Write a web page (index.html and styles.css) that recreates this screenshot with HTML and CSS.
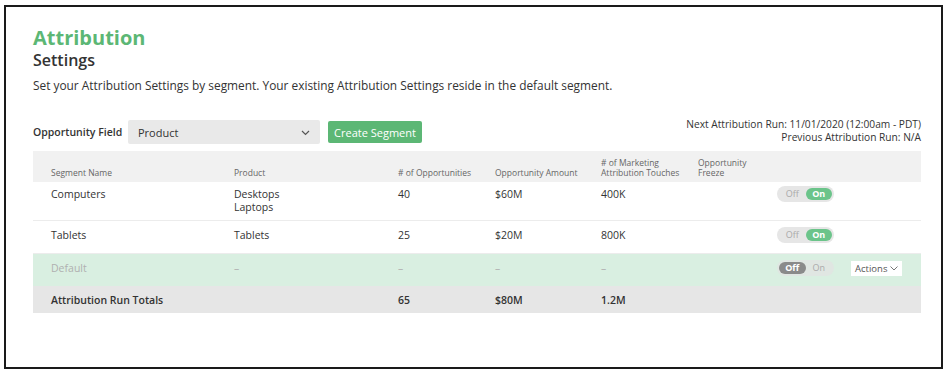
FILE: index.html
```html
<!DOCTYPE html>
<html>
<head>
<meta charset="utf-8">
<link rel="stylesheet" href="styles.css">
</head>
<body>
<div class="frame">
  <div class="page">
    <h1 class="title">Attribution</h1>
    <h2 class="subtitle">Settings</h2>
    <p class="desc">Set your Attribution Settings by segment. Your existing Attribution Settings reside in the default segment.</p>
    <div class="toolbar">
      <div class="field">
        <span class="field-label">Opportunity Field</span>
        <div class="select">
          <span>Product</span>
          <svg class="chev" width="9" height="6" viewBox="0 0 9 6"><path d="M1 1l3.5 3.5L8 1" fill="none" stroke="#555" stroke-width="1.2"/></svg>
        </div>
        <button class="btn">Create Segment</button>
      </div>
      <div class="runs">
        <div>Next Attribution Run: 11/01/2020 (12:00am - PDT)</div>
        <div>Previous Attribution Run: N/A</div>
      </div>
    </div>
    <div class="table">
      <div class="row head">
        <div class="c c1">Segment Name</div>
        <div class="c c2">Product</div>
        <div class="c c3"># of Opportunities</div>
        <div class="c c4">Opportunity Amount</div>
        <div class="c c5"># of Marketing<br>Attribution Touches</div>
        <div class="c c6">Opportunity<br>Freeze</div>
        <div class="c c7"></div>
      </div>
      <div class="row body r1">
        <div class="c c1">Computers</div>
        <div class="c c2">Desktops<br>Laptops</div>
        <div class="c c3">40</div>
        <div class="c c4">$60M</div>
        <div class="c c5">400K</div>
        <div class="c c6"></div>
        <div class="c c7"><div class="toggle"><span class="opt">Off</span><span class="opt on">On</span></div></div>
      </div>
      <div class="row body r2">
        <div class="c c1">Tablets</div>
        <div class="c c2">Tablets</div>
        <div class="c c3">25</div>
        <div class="c c4">$20M</div>
        <div class="c c5">800K</div>
        <div class="c c6"></div>
        <div class="c c7"><div class="toggle"><span class="opt">Off</span><span class="opt on">On</span></div></div>
      </div>
      <div class="row body default">
        <div class="c c1">Default</div>
        <div class="c c2">–</div>
        <div class="c c3">–</div>
        <div class="c c4">–</div>
        <div class="c c5">–</div>
        <div class="c c6"></div>
        <div class="c c7">
          <div class="toggle"><span class="opt off">Off</span><span class="opt">On</span></div>
          <div class="actions">Actions <svg width="8" height="5" viewBox="0 0 8 5"><path d="M0.5 0.5l3.5 3.5 3.5-3.5" fill="none" stroke="#777" stroke-width="1"/></svg></div>
        </div>
      </div>
      <div class="row totals">
        <div class="c c1">Attribution Run Totals</div>
        <div class="c c2"></div>
        <div class="c c3">65</div>
        <div class="c c4">$80M</div>
        <div class="c c5">1.2M</div>
        <div class="c c6"></div>
        <div class="c c7"></div>
      </div>
    </div>
  </div>
</div>
</body>
</html>
```
FILE: styles.css
```css
html, body {
  margin: 0;
  padding: 0;
  background: #fff;
}
body {
  font-family: "Open Sans", "Liberation Sans", sans-serif;
  color: #333;
}
.frame {
  margin: 5px 0 0 4px;
  width: 935px;
  height: 360px;
  border: 2px solid #1a1a1a;
  box-sizing: content-box;
}
.page {
  padding: 19px 20px 0 27px;
}
.title {
  margin: 0;
  font-size: 20px;
  font-weight: 700;
  color: #5cb775;
  line-height: 24px;
}
.subtitle {
  margin: 0;
  font-size: 16px;
  font-weight: 600;
  color: #333;
  line-height: 20px;
}
.desc {
  margin: 6px 0 0;
  font-size: 11.88px;
  line-height: 18px;
  color: #333;
}
.toolbar {
  display: flex;
  justify-content: space-between;
  align-items: flex-start;
  margin-top: 24px;
}
.field {
  display: flex;
  align-items: center;
  margin-top: 2px;
}
.field-label {
  font-size: 10.5px;
  font-weight: 600;
  color: #333;
  width: 95px;
  white-space: nowrap;
}
.select {
  width: 192px;
  height: 24px;
  background: #e9e9e9;
  border-radius: 2px;
  display: flex;
  align-items: center;
  justify-content: space-between;
  padding: 0 10px 0 10px;
  box-sizing: border-box;
  font-size: 11px;
  color: #333;
}
.chev { margin-top: 1px; }
.btn {
  margin-left: 8px;
  height: 22px;
  width: 94px;
  background: #5cb775;
  color: #fff;
  border: none;
  border-radius: 2px;
  font-family: inherit;
  font-size: 11px;
  padding: 0;
}
.runs {
  text-align: right;
  font-size: 10.2px;
  line-height: 13px;
  color: #333;
}
.table {
  margin-top: 7px;
  width: 888px;
}
.row {
  display: grid;
  grid-template-columns: 201px 164px 97px 106px 97px 79px 1fr;
  align-items: start;
}
.c:first-child { padding-left: 18px; }
.head {
  background: #f1f1f1;
  height: 31px;
  align-items: end;
  font-size: 8.5px;
  line-height: 10px;
  color: #666;
  padding-bottom: 4px;
  box-sizing: border-box;
}
.body {
  font-size: 10.5px;
  line-height: 13px;
  color: #333;
  border-bottom: 1px solid #ececec;
  padding-top: 6px;
  box-sizing: border-box;
}
.r1 { height: 39px; }
.r2 { height: 33px; padding-top: 8px; }
.default {
  height: 32px;
  background: #d9efe1;
  color: #aaa;
  border-bottom: none;
  padding-top: 8px;
}
.default .c { color: #b0b0b0; }
.totals {
  height: 27px;
  background: #e6e6e6;
  font-size: 10.5px;
  font-weight: 600;
  color: #333;
  align-items: center;
}
.c7 {
  display: flex;
  align-items: center;
  gap: 17px;
}
.body .c7 { margin-top: -2px; }
.toggle {
  display: flex;
  align-items: center;
  background: #e6e6e6;
  border-radius: 9px;
  height: 16px;
  width: 57px;
  padding: 0 2px;
  box-sizing: border-box;
  font-size: 9px;
}
.opt {
  flex: 1;
  text-align: center;
  color: #aaa;
  height: 12px;
  line-height: 12px;
  border-radius: 6px;
}
.opt.on {
  background: #6bc48a;
  color: #fff;
  font-weight: 700;
}
.opt.off {
  background: #8a8a8a;
  color: #fff;
  font-weight: 700;
}
.default .toggle { background: #e0e6e2; }
.actions {
  background: #fff;
  height: 15px;
  padding: 0 4px;
  display: flex;
  align-items: center;
  gap: 3px;
  font-size: 9.5px;
  color: #555;
}
```
